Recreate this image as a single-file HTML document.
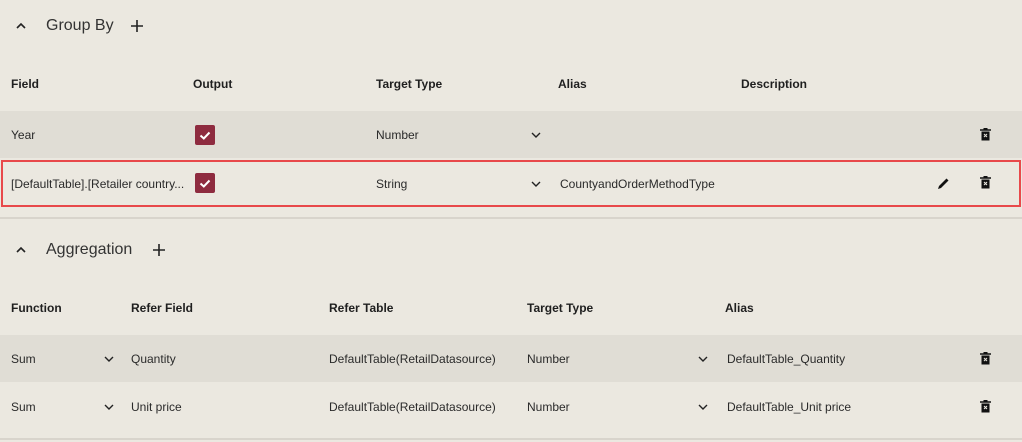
<!DOCTYPE html>
<html><head><meta charset="utf-8"><style>
*{margin:0;padding:0;box-sizing:border-box}
body{width:1022px;height:442px;background:#ebe8e0;font-family:"Segoe UI","Liberation Sans",sans-serif;color:#2a2a2a;position:relative;overflow:hidden;font-size:12px}
.a{position:absolute;white-space:nowrap}
.h{font-weight:bold;font-size:12px;color:#1f1f1f}
.t{font-size:16px;color:#333}
.row{position:absolute;left:0;width:1022px;height:47px}
.alt{background:#e0ddd5}
.cb{position:absolute;width:20px;height:20px;background:#8e2b3f;border-radius:2px}
.line{position:absolute;left:0;width:1022px;height:2px;background:#d8d4cc}
</style></head><body>
<svg class="a" style="left:15px;top:21px" width="12" height="10"><path d="M2 7 L6 3 L10 7" fill="none" stroke="#222" stroke-width="1.6"/></svg>
<div class="a t" style="left:46px;top:17px">Group By</div>
<svg class="a" style="left:129px;top:18px" width="16" height="16"><path d="M8 2V14M2 8H14" stroke="#222" stroke-width="1.6"/></svg>

<div class="a h" style="left:11px;top:77px">Field</div>
<div class="a h" style="left:193px;top:77px">Output</div>
<div class="a h" style="left:376px;top:77px">Target Type</div>
<div class="a h" style="left:558px;top:77px">Alias</div>
<div class="a h" style="left:741px;top:77px">Description</div>

<div class="row alt" style="top:111px"></div>
<div class="a" style="left:11px;top:128px">Year</div>
<div class="cb" style="left:195px;top:125px"></div>
<svg class="a" style="left:195px;top:125px" width="20" height="20"><path d="M5.5 10.5 L8.8 13.5 L14.5 7.5" fill="none" stroke="#fff" stroke-width="2"/></svg>
<div class="a" style="left:376px;top:128px">Number</div>
<svg class="a" style="left:531px;top:131px" width="10" height="8"><path d="M1 2 L5 6 L9 2" fill="none" stroke="#222" stroke-width="1.4"/></svg>
<svg class="a" style="left:980px;top:128px" width="11" height="13"><path d="M0 2H11M3.5 0.5H7.5" stroke="#111" stroke-width="1.4"/><rect x="1.5" y="3.5" width="8" height="9" fill="#111"/><path d="M4 6 L7 9 M7 6 L4 9" stroke="#e0ddd5" stroke-width="1.1"/></svg>

<div class="a" style="left:1px;top:160px;width:1020px;height:47px;border:2px solid #e8494b"></div>
<div class="a" style="left:11px;top:177px">[DefaultTable].[Retailer country...</div>
<div class="cb" style="left:195px;top:173px"></div>
<svg class="a" style="left:195px;top:173px" width="20" height="20"><path d="M5.5 10.5 L8.8 13.5 L14.5 7.5" fill="none" stroke="#fff" stroke-width="2"/></svg>
<div class="a" style="left:376px;top:177px">String</div>
<svg class="a" style="left:531px;top:180px" width="10" height="8"><path d="M1 2 L5 6 L9 2" fill="none" stroke="#222" stroke-width="1.4"/></svg>
<div class="a" style="left:560px;top:177px">CountyandOrderMethodType</div>
<svg class="a" style="left:937px;top:177px" width="13" height="13"><path d="M1 12 L2 9 L9.5 1.5 L11.5 3.5 L4 11 Z" fill="#111"/></svg>
<svg class="a" style="left:980px;top:176px" width="11" height="13"><path d="M0 2H11M3.5 0.5H7.5" stroke="#111" stroke-width="1.4"/><rect x="1.5" y="3.5" width="8" height="9" fill="#111"/><path d="M4 6 L7 9 M7 6 L4 9" stroke="#ebe8e0" stroke-width="1.1"/></svg>

<div class="line" style="top:217px"></div>

<svg class="a" style="left:15px;top:245px" width="12" height="10"><path d="M2 7 L6 3 L10 7" fill="none" stroke="#222" stroke-width="1.6"/></svg>
<div class="a t" style="left:46px;top:241px">Aggregation</div>
<svg class="a" style="left:151px;top:242px" width="16" height="16"><path d="M8 2V14M2 8H14" stroke="#222" stroke-width="1.6"/></svg>

<div class="a h" style="left:11px;top:301px">Function</div>
<div class="a h" style="left:131px;top:301px">Refer Field</div>
<div class="a h" style="left:329px;top:301px">Refer Table</div>
<div class="a h" style="left:527px;top:301px">Target Type</div>
<div class="a h" style="left:725px;top:301px">Alias</div>

<div class="row alt" style="top:335px"></div>
<div class="a" style="left:11px;top:352px">Sum</div>
<svg class="a" style="left:104px;top:355px" width="10" height="8"><path d="M1 2 L5 6 L9 2" fill="none" stroke="#222" stroke-width="1.4"/></svg>
<div class="a" style="left:131px;top:352px">Quantity</div>
<div class="a" style="left:329px;top:352px">DefaultTable(RetailDatasource)</div>
<div class="a" style="left:527px;top:352px">Number</div>
<svg class="a" style="left:698px;top:355px" width="10" height="8"><path d="M1 2 L5 6 L9 2" fill="none" stroke="#222" stroke-width="1.4"/></svg>
<div class="a" style="left:727px;top:352px">DefaultTable_Quantity</div>
<svg class="a" style="left:980px;top:352px" width="11" height="13"><path d="M0 2H11M3.5 0.5H7.5" stroke="#111" stroke-width="1.4"/><rect x="1.5" y="3.5" width="8" height="9" fill="#111"/><path d="M4 6 L7 9 M7 6 L4 9" stroke="#e0ddd5" stroke-width="1.1"/></svg>

<div class="a" style="left:11px;top:400px">Sum</div>
<svg class="a" style="left:104px;top:403px" width="10" height="8"><path d="M1 2 L5 6 L9 2" fill="none" stroke="#222" stroke-width="1.4"/></svg>
<div class="a" style="left:131px;top:400px">Unit price</div>
<div class="a" style="left:329px;top:400px">DefaultTable(RetailDatasource)</div>
<div class="a" style="left:527px;top:400px">Number</div>
<svg class="a" style="left:698px;top:403px" width="10" height="8"><path d="M1 2 L5 6 L9 2" fill="none" stroke="#222" stroke-width="1.4"/></svg>
<div class="a" style="left:727px;top:400px">DefaultTable_Unit price</div>
<svg class="a" style="left:980px;top:400px" width="11" height="13"><path d="M0 2H11M3.5 0.5H7.5" stroke="#111" stroke-width="1.4"/><rect x="1.5" y="3.5" width="8" height="9" fill="#111"/><path d="M4 6 L7 9 M7 6 L4 9" stroke="#ebe8e0" stroke-width="1.1"/></svg>

<div class="line" style="top:438px"></div>
</body></html>
